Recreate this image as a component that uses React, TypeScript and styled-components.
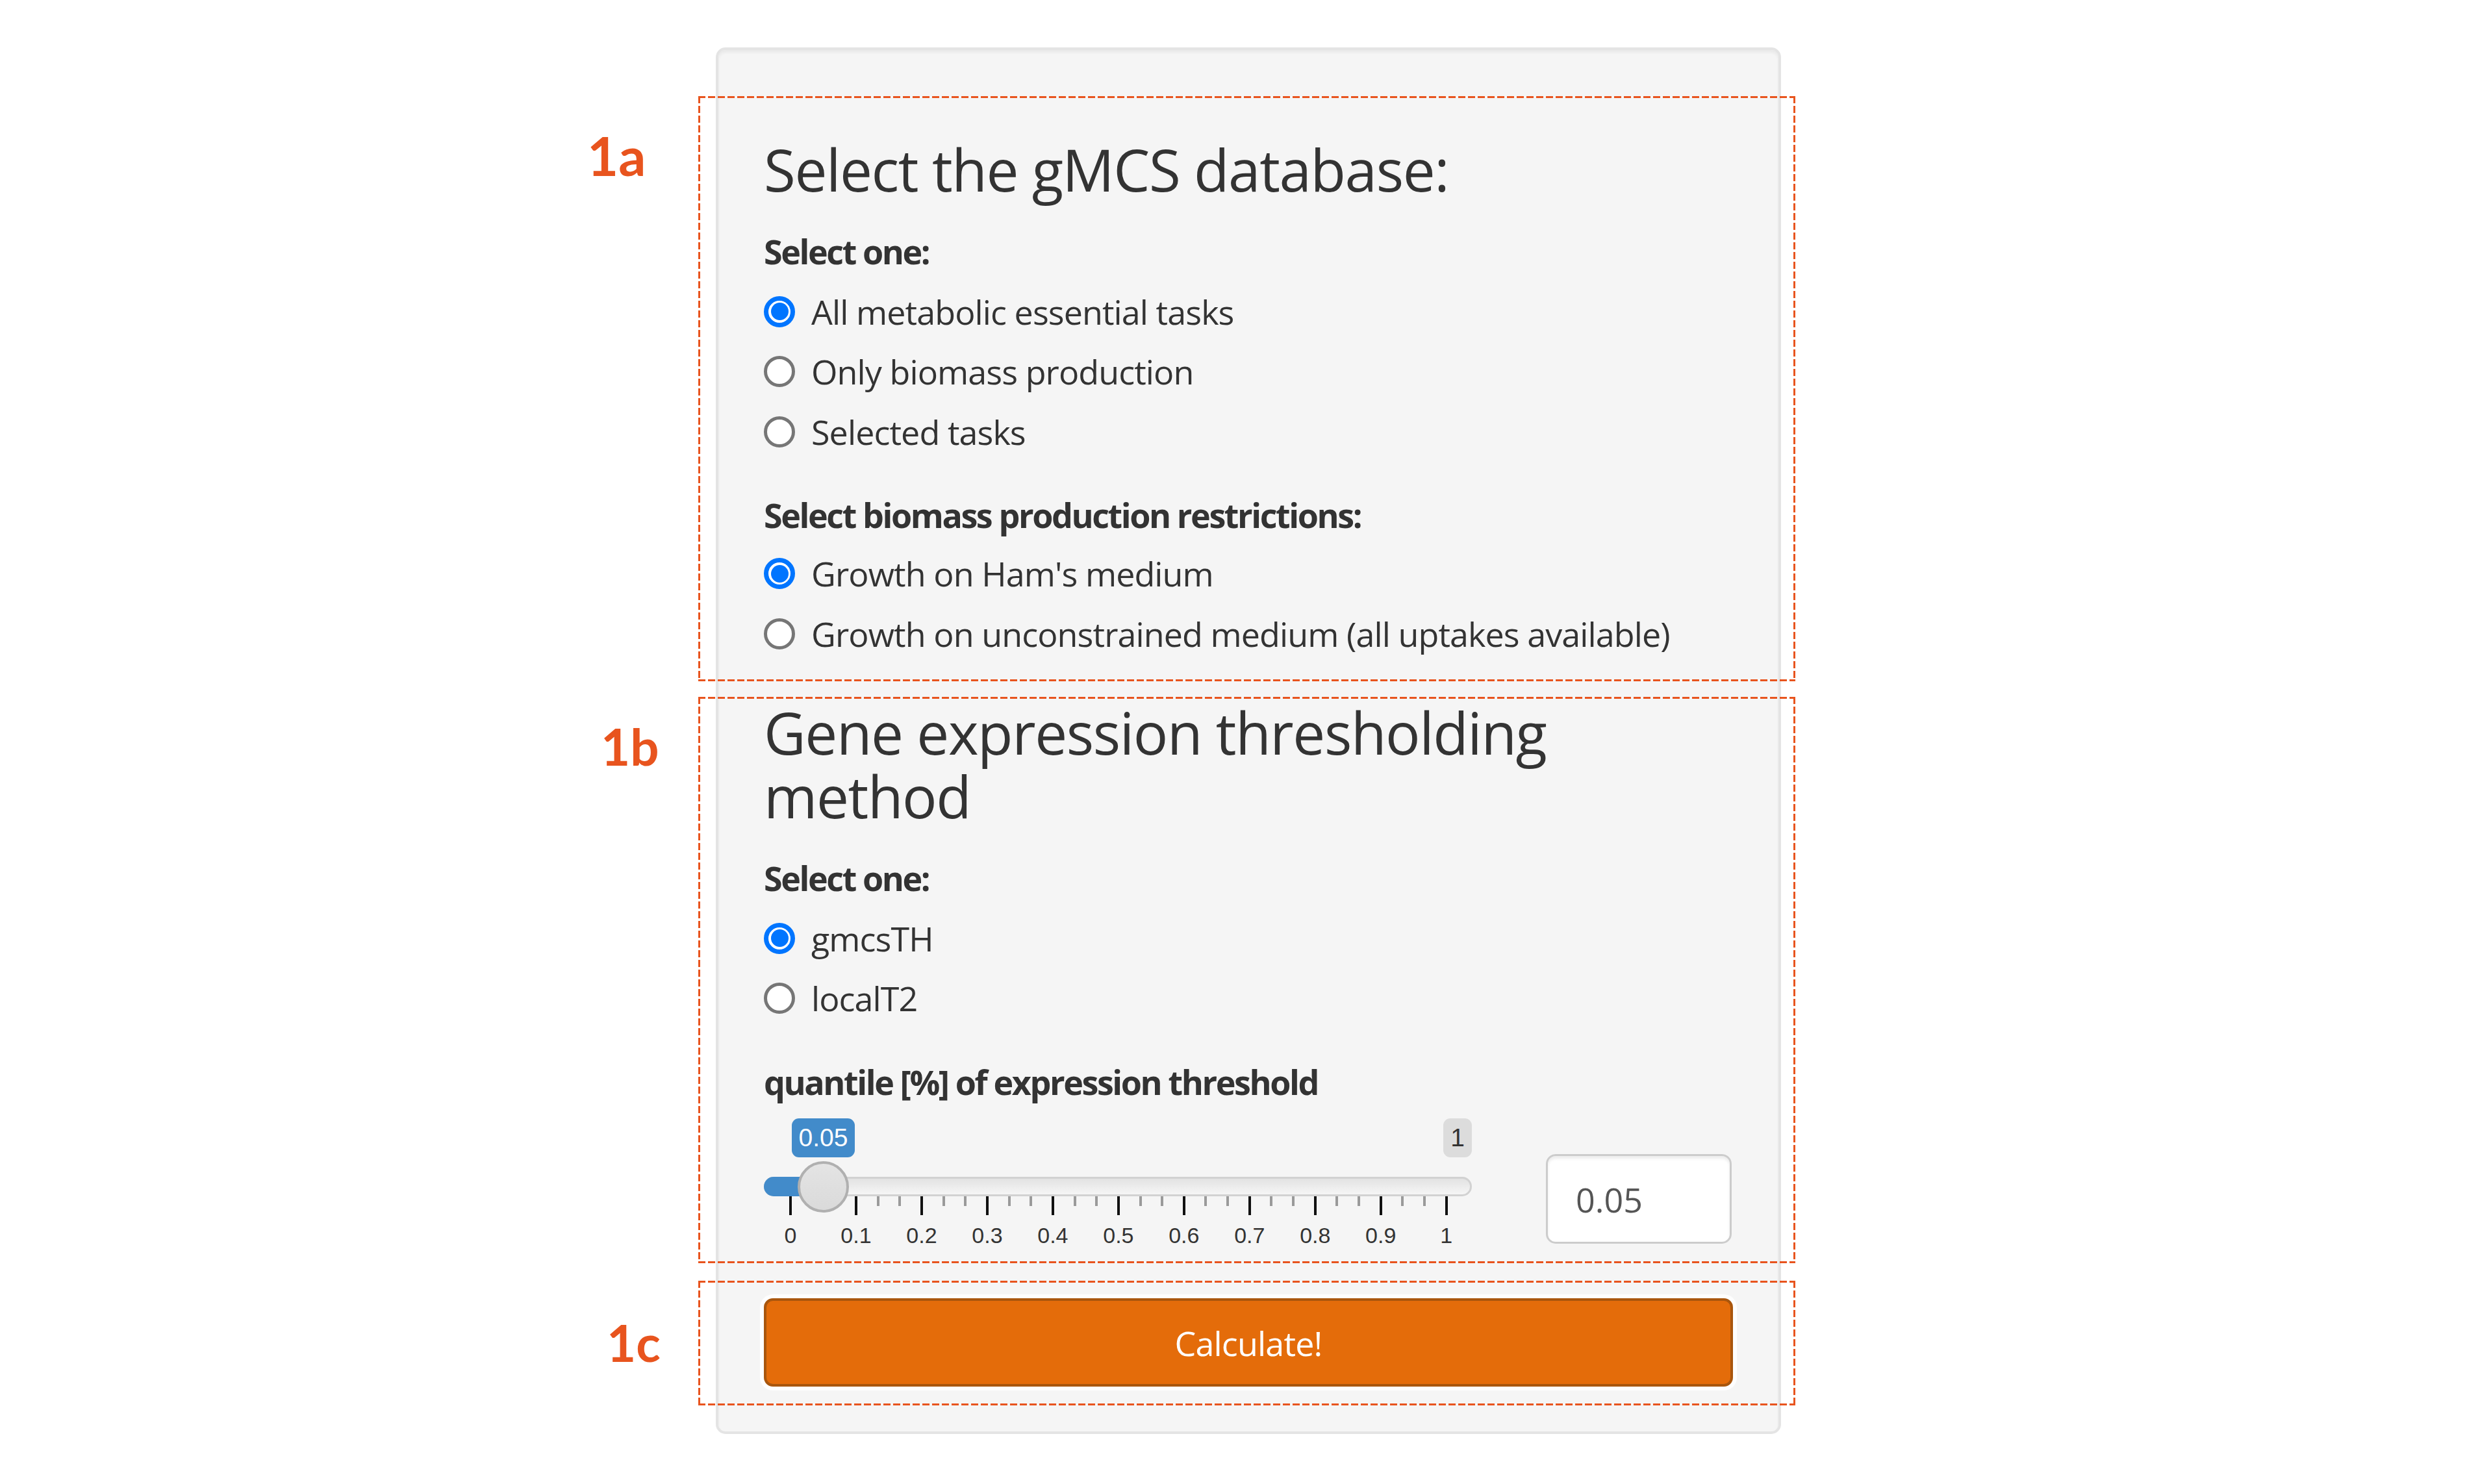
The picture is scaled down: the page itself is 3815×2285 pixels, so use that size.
import React from "react";
import styled, { createGlobalStyle } from "styled-components";

const ANNOT = "#e8541e";

const GlobalStyle = createGlobalStyle`
  html, body {
    margin: 0;
    background: #ffffff;
  }
  body {
    font-family: "Open Sans", "Noto Sans", sans-serif;
    color: #333333;
  }
`;

const Page = styled.main`
  min-height: 2285px;
  box-sizing: border-box;
  padding: 73px 0 0 1102px;
`;

const Well = styled.div`
  width: 1640px;
  box-sizing: border-box;
  padding: 71px 70px 40px;
  background: #f5f5f5;
  border: 4px solid #e4e4e4;
  border-radius: 15px;
  box-shadow: inset 0 4px 4px rgba(0, 0, 0, 0.05);
`;

const dashX = `repeating-linear-gradient(90deg, ${ANNOT} 0 11px, transparent 11px 15px)`;
const dashY = `repeating-linear-gradient(180deg, ${ANNOT} 0 11px, transparent 11px 15px)`;

// annotation box: dashed outline that sticks out past the well on both sides
const Section = styled.section<{ $gap: number; $padTop: number; $padBottom: number }>`
  position: relative;
  margin: ${(p) => p.$gap}px -96px 0 -101px;
  padding: ${(p) => p.$padTop}px 96px ${(p) => p.$padBottom}px 101px;
  background:
    ${dashX} left top / 100% 3px no-repeat,
    ${dashX} left bottom / 100% 3px no-repeat,
    ${dashY} left top / 3px 100% no-repeat,
    ${dashY} right top / 3px 100% no-repeat;
`;

const Tag = styled.span<{ $left: number; $top: number; $size: number }>`
  position: absolute;
  left: ${(p) => p.$left}px;
  top: ${(p) => p.$top}px;
  font: 700 ${(p) => p.$size}px/1 Lato, "Liberation Sans", sans-serif;
  color: ${ANNOT};
  white-space: nowrap;
`;

const Heading = styled.h3`
  margin: 0 0 40px;
  font-size: 89px;
  font-weight: 500;
  line-height: 98px;
  letter-spacing: -1.4px;
  color: #333333;
`;

const FormGroup = styled.div<{ $gap?: number }>`
  margin-top: ${(p) => p.$gap ?? 0}px;
`;

const FieldLabel = styled.div<{ $after?: number }>`
  margin-bottom: ${(p) => p.$after ?? 18.5}px;
  font-size: 52px;
  font-weight: 700;
  line-height: 74px;
  letter-spacing: -2.4px;
  color: #333333;
`;

const RadioList = styled.div`
  display: flex;
  flex-direction: column;
  gap: 18.5px;
`;

const RadioRow = styled.label`
  display: flex;
  align-items: center;
  gap: 25px;
  height: 74px;
  font-size: 52px;
  line-height: 74px;
  letter-spacing: -0.9px;
  color: #333333;
`;

const RadioDot = styled.span<{ $checked: boolean }>`
  position: relative;
  flex: none;
  width: 48px;
  height: 48px;
  box-sizing: border-box;
  border-radius: 50%;
  background: #ffffff;
  border: ${(p) => (p.$checked ? "7px solid #0075ff" : "5px solid #767676")};

  &::after {
    content: "";
    display: ${(p) => (p.$checked ? "block" : "none")};
    position: absolute;
    inset: 3.5px;
    border-radius: 50%;
    background: #0075ff;
  }
`;

const SliderRow = styled.div`
  display: flex;
  align-items: flex-start;
  margin-top: 19.5px;
`;

const Slider = styled.div`
  flex: none;
  display: flex;
  flex-direction: column;
  width: 1090px;
  font-family: "Liberation Sans", Arial, sans-serif;
`;

const BadgeRow = styled.div`
  display: flex;
  align-items: flex-start;
  height: 60px;
`;

const BadgeAnchor = styled.div`
  display: flex;
  justify-content: center;
  width: 0;
`;

const Badge = styled.div<{ $active?: boolean }>`
  flex: none;
  padding: 4px 11px;
  font-size: 39px;
  line-height: 52px;
  border-radius: 11px;
  white-space: nowrap;
  background: ${(p) => (p.$active ? "#428bca" : "#dcdcdc")};
  color: ${(p) => (p.$active ? "#ffffff" : "#333333")};
`;

const MaxBadge = styled(Badge)`
  margin-left: auto;
`;

const TrackWrap = styled.div`
  position: relative;
  margin-top: 30px;
`;

const Track = styled.div`
  display: flex;
  height: 30px;
  overflow: hidden;
  border-radius: 15px;
  background: linear-gradient(to bottom, #e0e0e0, #f8f8f8);
  box-shadow: inset 0 0 0 3px #d2d2d2;
`;

const Bar = styled.div`
  flex: none;
  background: #428bca;
`;

const Handle = styled.div`
  position: absolute;
  top: -24px;
  width: 79px;
  height: 79px;
  margin-left: -39.5px;
  box-sizing: border-box;
  border: 4px solid #b0b0b0;
  border-radius: 50%;
  background: linear-gradient(to bottom, #e4e4e4, #dadada);
`;

const Scale = styled.div`
  display: flex;
  justify-content: space-between;
  padding: 0 37px 0 39px;
  height: 80px;
`;

const TickColumn = styled.div`
  display: flex;
  flex-direction: column;
  align-items: center;
  width: 4px;
`;

const TickLine = styled.span<{ $major: boolean }>`
  width: 4px;
  height: ${(p) => (p.$major ? 30 : 15)}px;
  background: ${(p) => (p.$major ? "#111111" : "#9a9a9a")};
`;

const TickText = styled.span`
  margin-top: 11px;
  font-size: 34px;
  line-height: 40px;
  white-space: nowrap;
  color: #333333;
`;

const NumberInput = styled.input`
  flex: none;
  width: 286px;
  height: 138px;
  margin: 55px 2px 0 auto;
  box-sizing: border-box;
  padding: 0 43px;
  border: 3px solid #cccccc;
  border-radius: 15px;
  background: #ffffff;
  box-shadow: inset 0 4px 4px rgba(0, 0, 0, 0.075);
  font-family: "Open Sans", "Noto Sans", sans-serif;
  font-size: 52px;
  color: #555555;
  outline: none;
`;

const CalcButton = styled.button`
  display: block;
  width: 100%;
  height: 136px;
  border: 4px solid #a9560d;
  border-radius: 14px;
  background: #e46c0a;
  box-shadow: 0 0 0 6px rgba(255, 255, 255, 0.85);
  color: #ffffff;
  font-family: "Open Sans", "Noto Sans", sans-serif;
  font-size: 52px;
  letter-spacing: -0.8px;
  cursor: pointer;
`;

type Option = { label: string; checked?: boolean };

const RadioGroup: React.FC<{ options: Option[] }> = ({ options }) => (
  <RadioList>
    {options.map((o) => (
      <RadioRow key={o.label}>
        <RadioDot $checked={!!o.checked} />
        {o.label}
      </RadioRow>
    ))}
  </RadioList>
);

const GRID_LEFT = 41;
const GRID_WIDTH = 1010;

const QuantileSlider: React.FC<{ value: number; max: number }> = ({ value, max }) => {
  const pos = GRID_LEFT + (value / max) * GRID_WIDTH;
  // 10 steps, each split in three by minor ticks
  const ticks = Array.from({ length: 31 }, (_, i) => i);

  return (
    <Slider>
      <BadgeRow>
        <BadgeAnchor style={{ marginLeft: pos }}>
          <Badge $active>{value}</Badge>
        </BadgeAnchor>
        <MaxBadge>{max}</MaxBadge>
      </BadgeRow>
      <TrackWrap>
        <Track>
          <Bar style={{ width: pos }} />
        </Track>
        <Handle style={{ left: pos }} />
      </TrackWrap>
      <Scale>
        {ticks.map((i) => {
          const major = i % 3 === 0;
          const step = i / 3;
          return (
            <TickColumn key={i}>
              <TickLine $major={major} />
              {major && (
                <TickText>{step === 0 ? "0" : step === 10 ? "1" : `0.${step}`}</TickText>
              )}
            </TickColumn>
          );
        })}
      </Scale>
    </Slider>
  );
};

const App: React.FC = () => {
  return (
    <Page>
      <GlobalStyle />
      <Well>
        <Section $gap={0} $padTop={64} $padBottom={36.5}>
          <Tag $left={-171} $top={50} $size={83}>1a</Tag>
          <Heading>Select the gMCS database:</Heading>
          <FormGroup>
            <FieldLabel>Select one:</FieldLabel>
            <RadioGroup
              options={[
                { label: "All metabolic essential tasks", checked: true },
                { label: "Only biomass production" },
                { label: "Selected tasks" },
              ]}
            />
          </FormGroup>
          <FormGroup $gap={54.5}>
            <FieldLabel $after={16}>Select biomass production restrictions:</FieldLabel>
            <RadioGroup
              options={[
                { label: "Growth on Ham's medium", checked: true },
                { label: "Growth on unconstrained medium (all uptakes available)" },
              ]}
            />
          </FormGroup>
        </Section>

        <Section $gap={24} $padTop={6} $padBottom={23}>
          <Tag $left={-150} $top={37} $size={78}>1b</Tag>
          <Heading>
            Gene expression thresholding
            <br />
            method
          </Heading>
          <FormGroup>
            <FieldLabel>Select one:</FieldLabel>
            <RadioGroup
              options={[{ label: "gmcsTH", checked: true }, { label: "localT2" }]}
            />
          </FormGroup>
          <FormGroup $gap={54.5}>
            <FieldLabel $after={0}>quantile [%] of expression threshold</FieldLabel>
            <SliderRow>
              <QuantileSlider value={0.05} max={1} />
              <NumberInput type="text" readOnly value="0.05" />
            </SliderRow>
          </FormGroup>
        </Section>

        <Section $gap={27} $padTop={27} $padBottom={29}>
          <Tag $left={-141} $top={56} $size={78}>1c</Tag>
          <CalcButton type="button">Calculate!</CalcButton>
        </Section>
      </Well>
    </Page>
  );
};

export default App;
